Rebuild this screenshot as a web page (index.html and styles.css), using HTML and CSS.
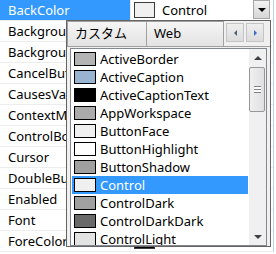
FILE: index.html
```html
<!DOCTYPE html>
<html>
<head>
    <title>BackColor</title>
    <link rel="stylesheet" href="styles.css">
</head>
<body>
    <!-- Property grid -->
    <div class="grid">
        <div class="row selected">
            <div class="name">BackColor</div>
            <div class="value">
                <span class="swatch" style="background: #f0f0f0;"></span>
                <span class="value-text">Control</span>
                <span class="drop"></span>
            </div>
        </div>
        <div class="row"><div class="name">BackgroundImage</div><div class="value"></div></div>
        <div class="row"><div class="name">BackgroundImageLayout</div><div class="value"></div></div>
        <div class="row"><div class="name">CancelButton</div><div class="value"></div></div>
        <div class="row"><div class="name">CausesValidation</div><div class="value"></div></div>
        <div class="row"><div class="name">ContextMenuStrip</div><div class="value"></div></div>
        <div class="row"><div class="name">ControlBox</div><div class="value"></div></div>
        <div class="row"><div class="name">Cursor</div><div class="value"></div></div>
        <div class="row"><div class="name">DoubleBuffered</div><div class="value"></div></div>
        <div class="row"><div class="name">Enabled</div><div class="value"></div></div>
        <div class="row"><div class="name">Font</div><div class="value"></div></div>
        <div class="row">
            <div class="name">ForeColor</div>
            <div class="value">
                <span class="swatch" style="background: #000000;"></span>
                <span class="value-text">ControlText</span>
            </div>
        </div>
    </div>

    <!-- Colour picker drop-down -->
    <div class="popup">
        <div class="tabs">
            <div class="tab">カスタム</div>
            <div class="tab">Web</div>
            <div class="tab-scroll">
                <span class="tab-btn"><span class="tri-left"></span></span>
                <span class="tab-btn"><span class="tri-right"></span></span>
            </div>
        </div>
        <div class="listbox">
            <ul class="colors">
                <li><span class="swatch" style="background: #b4b4b4;"></span>ActiveBorder</li>
                <li><span class="swatch" style="background: #99b4d1;"></span>ActiveCaption</li>
                <li><span class="swatch" style="background: #000000;"></span>ActiveCaptionText</li>
                <li><span class="swatch" style="background: #ababab;"></span>AppWorkspace</li>
                <li><span class="swatch" style="background: #f0f0f0;"></span>ButtonFace</li>
                <li><span class="swatch" style="background: #ffffff;"></span>ButtonHighlight</li>
                <li><span class="swatch" style="background: #a0a0a0;"></span>ButtonShadow</li>
                <li class="active"><span class="swatch" style="background: #f0f0f0;"></span>Control</li>
                <li><span class="swatch" style="background: #a0a0a0;"></span>ControlDark</li>
                <li><span class="swatch" style="background: #696969;"></span>ControlDarkDark</li>
                <li><span class="swatch" style="background: #e3e3e3;"></span>ControlLight</li>
            </ul>
            <div class="vscroll">
                <div class="sb-btn"><span class="tri-up"></span></div>
                <div class="sb-track">
                    <div class="sb-thumb"><span class="grip"></span></div>
                </div>
                <div class="sb-btn"><span class="tri-down"></span></div>
            </div>
        </div>
    </div>
</body>
</html>
```

FILE: styles.css
```css
body {
    margin: 0;
    width: 276px;
    height: 254px;
    overflow: hidden;
    position: relative;
    background: #ffffff;
    font-family: 'Noto Sans', 'Noto Sans CJK JP', sans-serif;
    font-size: 13px;
    color: #000000;
}

.grid {
    display: flex;
    flex-direction: column;
    width: 273px;
    border-right: 1px solid #b9d1ea;
}

.row {
    display: flex;
    height: 21px;
    box-sizing: border-box;
    border-bottom: 1px solid #ededed;
}

.name {
    width: 130px;
    padding-left: 8px;
    box-sizing: border-box;
    line-height: 20px;
    white-space: nowrap;
    overflow: hidden;
}

.selected .name {
    background: #3399ff;
    color: #ffffff;
}

.value {
    flex: 1;
    display: flex;
    align-items: flex-start;
    border-left: 1px solid #ededed;
    padding-left: 3px;
}

.value .swatch {
    width: 21px;
    height: 16px;
    margin-top: 2px;
    box-sizing: border-box;
    border: 1px solid #3c3c3c;
}

.value-text {
    margin-left: 7px;
    line-height: 20px;
    flex: 1;
}

.drop {
    width: 17px;
    height: 19px;
    box-sizing: border-box;
    border: 1px solid #a6a6a6;
    background: linear-gradient(#f2f2f2, #d6d6d6);
    display: flex;
    align-items: center;
    justify-content: center;
    margin-right: 3px;
}

.drop::after {
    content: '';
    border-left: 4px solid transparent;
    border-right: 4px solid transparent;
    border-top: 4px solid #000000;
}

/* drop-down */

.popup {
    position: absolute;
    left: 66px;
    top: 20px;
    width: 205px;
    height: 227px;
    box-sizing: border-box;
    border: 1px solid #646464;
    background: #f0f0f0;
    display: flex;
    flex-direction: column;
}

.tabs {
    display: flex;
    height: 25px;
    border-bottom: 1px solid #a0a0a0;
}

.tab {
    box-sizing: border-box;
    height: 25px;
    line-height: 23px;
    border: 1px solid #a0a0a0;
    border-bottom: none;
    background: linear-gradient(#f5f5f5, #e3e3e3);
    padding-left: 7px;
    white-space: nowrap;
}

.tab:first-child {
    width: 80px;
}

.tab + .tab {
    width: 77px;
    border-left: none;
}

.tab-scroll {
    display: flex;
    gap: 2px;
    padding: 2px 0 0 2px;
}

.tab-btn {
    width: 18px;
    height: 19px;
    box-sizing: border-box;
    border: 1px solid #c4c4c4;
    background: linear-gradient(#eeeeee, #dcdcdc);
    display: flex;
    align-items: center;
    justify-content: center;
}

.tri-left {
    border-top: 3px solid transparent;
    border-bottom: 3px solid transparent;
    border-right: 3px solid #4f5f7a;
}

.tri-right {
    border-top: 3px solid transparent;
    border-bottom: 3px solid transparent;
    border-left: 3px solid #3d6fc4;
}

.listbox {
    display: flex;
    margin: 1px 3px 0 3px;
    height: 198px;
    box-sizing: border-box;
    border: 1px solid #828790;
    background: #ffffff;
}

.colors {
    list-style: none;
    margin: 0;
    padding: 1px 1px 0 1px;
    flex: 1;
    overflow: hidden;
}

.colors li {
    display: flex;
    align-items: center;
    height: 18px;
    padding-left: 2px;
    white-space: nowrap;
}

.colors li.active {
    background: #3399ff;
    color: #ffffff;
}

.colors .swatch {
    width: 22px;
    height: 14px;
    box-sizing: border-box;
    border: 1px solid #000000;
    margin-right: 4px;
    flex: none;
}

.vscroll {
    width: 17px;
    display: flex;
    flex-direction: column;
    background: #f0f0f0;
}

.sb-btn {
    height: 17px;
    display: flex;
    align-items: center;
    justify-content: center;
}

.tri-up {
    border-left: 4px solid transparent;
    border-right: 4px solid transparent;
    border-bottom: 4px solid #404040;
}

.tri-down {
    border-left: 4px solid transparent;
    border-right: 4px solid transparent;
    border-top: 4px solid #404040;
}

.sb-track {
    flex: 1;
}

.sb-thumb {
    margin: 1px 1px 0 0;
    height: 45px;
    box-sizing: border-box;
    border: 1px solid #979797;
    border-radius: 2px;
    background: linear-gradient(90deg, #f0f0f0, #e0e0e0);
    display: flex;
    align-items: center;
    justify-content: center;
}

.grip {
    width: 7px;
    height: 5px;
    border-top: 1px solid #808080;
    border-bottom: 1px solid #808080;
    background: linear-gradient(#ffffff 2px, #808080 2px, #808080 3px, #ffffff 3px);
}
```
